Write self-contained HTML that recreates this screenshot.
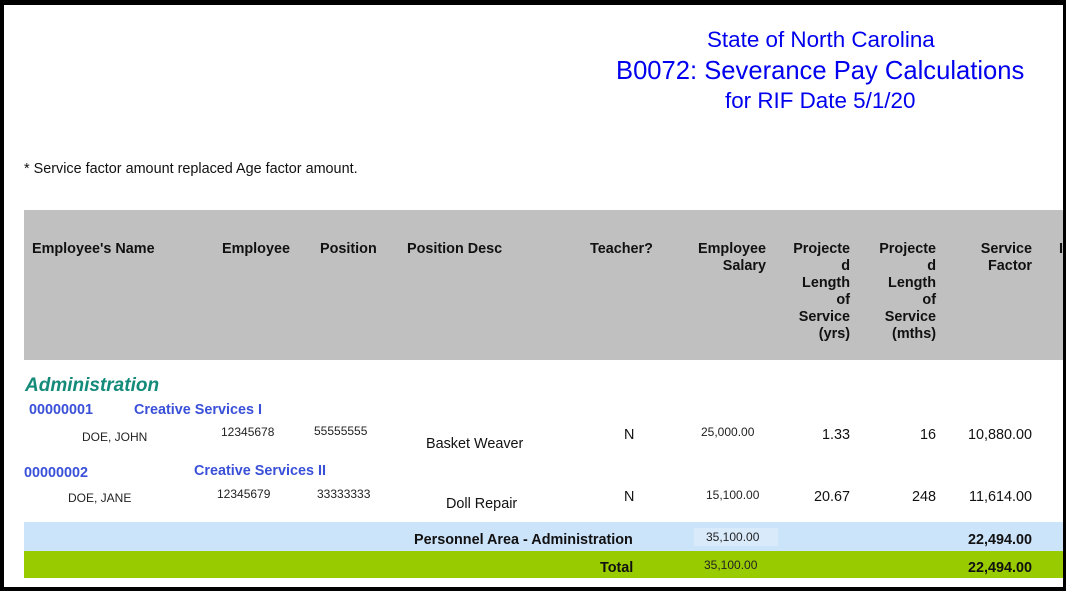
<!DOCTYPE html>
<html><head><meta charset="utf-8"><style>
*{margin:0;padding:0}
body{width:1066px;height:591px;background:#000;position:relative;overflow:hidden;font-family:"Liberation Sans",Arial,sans-serif}
#pg{position:absolute;left:4px;top:5px;width:1059px;height:582px;background:#fff;overflow:hidden}
.a{position:absolute;white-space:nowrap}
.t{color:#0000ee;font-size:22.4px}
.h{font-weight:bold;font-size:14.4px;color:#111;line-height:17px}
.r{text-align:right}
.s{font-size:12px;color:#222}
.b{color:#3a50d8;font-weight:bold;font-size:14.4px}
.m{font-size:14.4px;color:#111}
</style></head><body><div id="pg">
<div class="a t" style="left:703px;top:22px">State of North Carolina</div>
<div class="a t" style="left:612px;top:52px;font-size:25.6px">B0072: Severance Pay Calculations</div>
<div class="a t" style="left:721px;top:83px">for RIF Date 5/1/20</div>
<div class="a" style="left:20px;top:156px;font-size:14.4px;color:#111">* Service factor amount replaced Age factor amount.</div>
<div class="a" style="left:20px;top:205px;width:1039px;height:150px;background:#c0c0c0"></div>
<div class="a h" style="left:28px;top:236px">Employee's Name</div>
<div class="a h" style="left:218px;top:236px">Employee</div>
<div class="a h" style="left:316px;top:236px">Position</div>
<div class="a h" style="left:403px;top:236px">Position Desc</div>
<div class="a h" style="left:586px;top:236px">Teacher?</div>
<div class="a h r" style="left:680px;top:236px;width:82px">Employee<br>Salary</div>
<div class="a h r" style="left:770px;top:236px;width:76px">Projecte<br>d<br>Length<br>of<br>Service<br>(yrs)</div>
<div class="a h r" style="left:855px;top:236px;width:77px">Projecte<br>d<br>Length<br>of<br>Service<br>(mths)</div>
<div class="a h r" style="left:950px;top:236px;width:78px">Service<br>Factor</div>
<div class="a h" style="left:1055px;top:236px">I</div>
<div class="a" style="left:21px;top:370px;font-size:19px;font-weight:bold;font-style:italic;color:#138a7a">Administration</div>
<div class="a b" style="left:25px;top:397px">00000001</div>
<div class="a b" style="left:130px;top:397px">Creative Services I</div>
<div class="a s" style="left:78px;top:425px">DOE, JOHN</div>
<div class="a s" style="left:217px;top:420px">12345678</div>
<div class="a s" style="left:310px;top:419px">55555555</div>
<div class="a m" style="left:422px;top:431px">Basket Weaver</div>
<div class="a m" style="left:620px;top:422px">N</div>
<div class="a s" style="left:697px;top:420px">25,000.00</div>
<div class="a m r" style="left:780px;top:422px;width:66px">1.33</div>
<div class="a m r" style="left:870px;top:422px;width:62px">16</div>
<div class="a m r" style="left:950px;top:422px;width:78px">10,880.00</div>
<div class="a b" style="left:20px;top:460px">00000002</div>
<div class="a b" style="left:190px;top:458px">Creative Services II</div>
<div class="a s" style="left:64px;top:486px">DOE, JANE</div>
<div class="a s" style="left:213px;top:482px">12345679</div>
<div class="a s" style="left:313px;top:482px">33333333</div>
<div class="a m" style="left:442px;top:491px">Doll Repair</div>
<div class="a m" style="left:620px;top:484px">N</div>
<div class="a s" style="left:702px;top:483px">15,100.00</div>
<div class="a m r" style="left:780px;top:484px;width:66px">20.67</div>
<div class="a m r" style="left:870px;top:484px;width:62px">248</div>
<div class="a m r" style="left:950px;top:484px;width:78px">11,614.00</div>
<div class="a" style="left:20px;top:517px;width:1039px;height:29px;background:#cce4fa"></div>
<div class="a" style="left:690px;top:523px;width:84px;height:18px;background:#d9eafb"></div>
<div class="a h" style="left:410px;top:527px">Personnel Area - Administration</div>
<div class="a s" style="left:702px;top:525px">35,100.00</div>
<div class="a h r" style="left:950px;top:527px;width:78px">22,494.00</div>
<div class="a" style="left:20px;top:546px;width:1039px;height:27px;background:#99cc00"></div>
<div class="a h" style="left:596px;top:555px">Total</div>
<div class="a s" style="left:700px;top:553px">35,100.00</div>
<div class="a h r" style="left:950px;top:555px;width:78px">22,494.00</div>
</div></body></html>
